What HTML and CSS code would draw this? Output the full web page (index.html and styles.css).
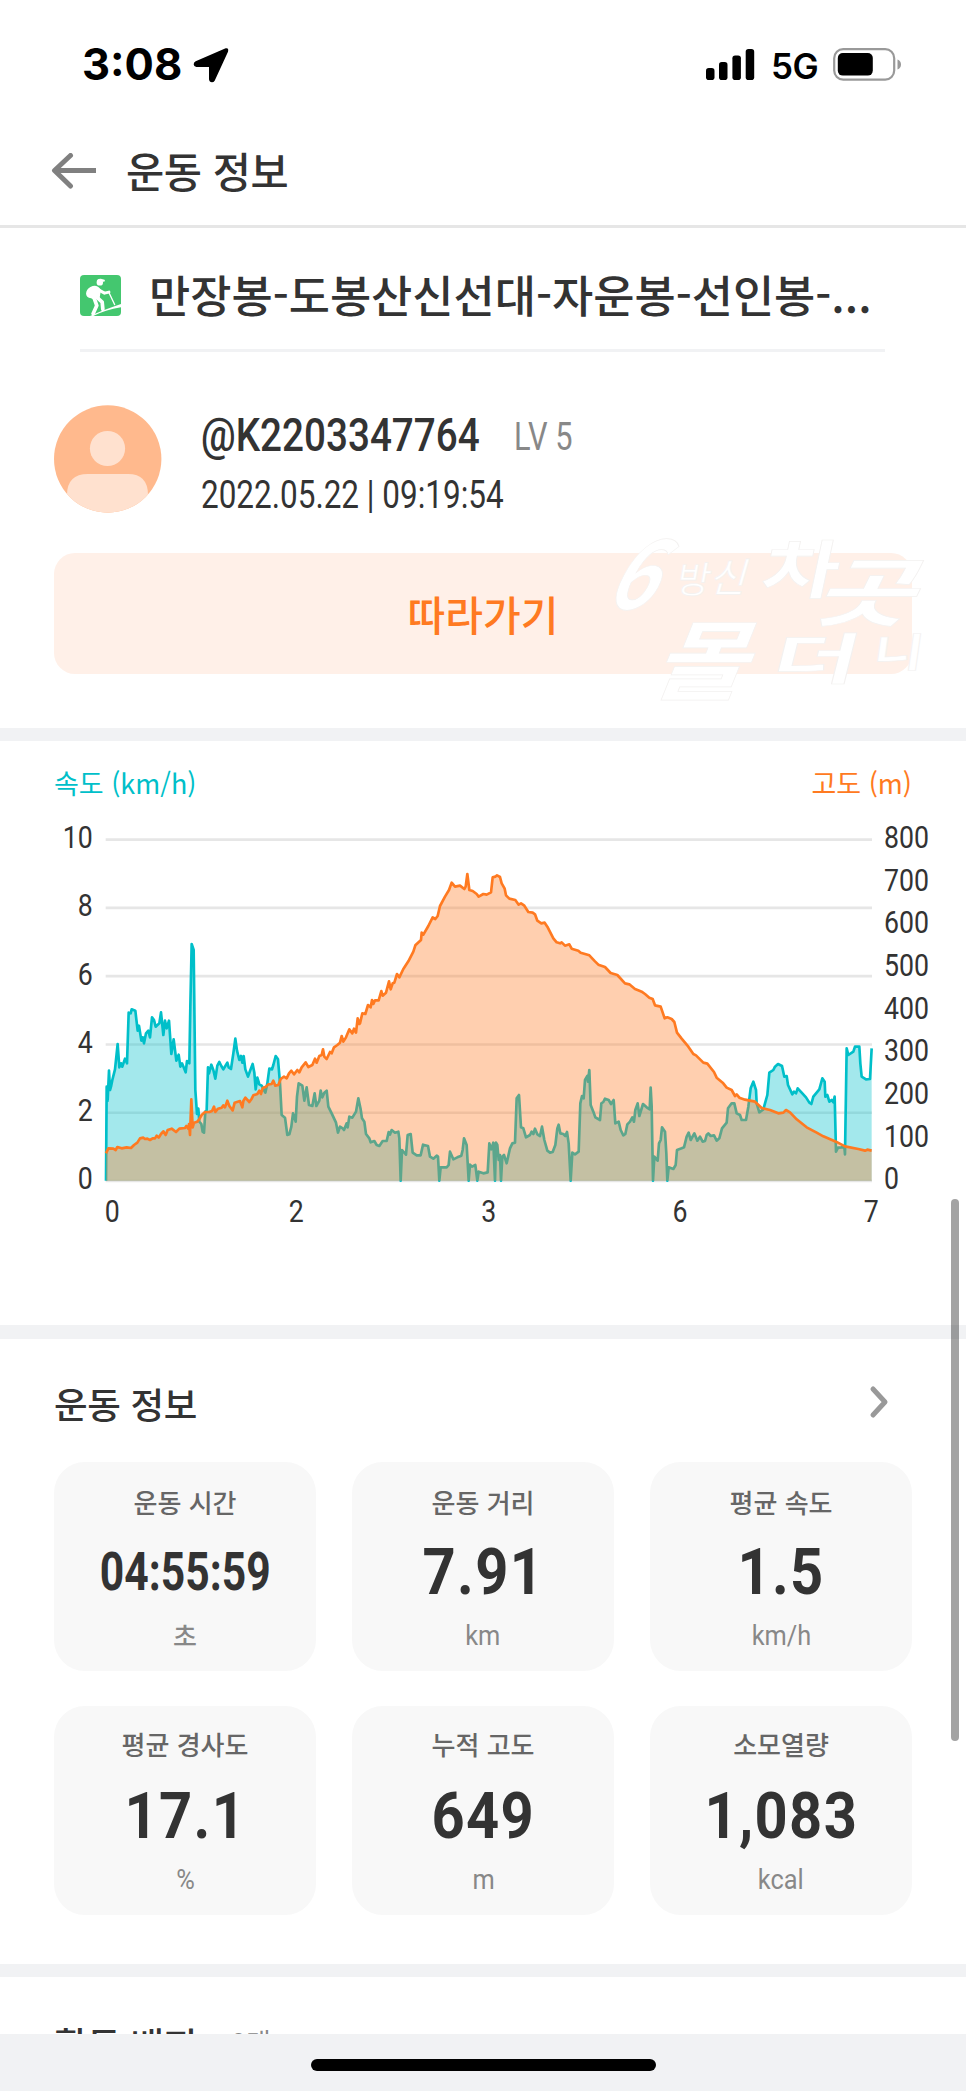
FILE: index.html
```html
<!DOCTYPE html>
<html lang="ko">
<head>
<meta charset="utf-8">
<title>운동 정보</title>
<link rel="stylesheet" href="styles.css">
</head>
<body>
<div class="screen">
  <div class="statusbar">
    <div class="status-left">
      <span class="clock">3:08</span>
      <svg class="location" width="36" height="36" viewBox="0 0 108 108"><path d="M98 4Q108 2 105 14L65 101Q62 106 57 106Q49 106 48 97L48 60L10 60Q2 59 2 52Q2 46 8 43Z"/></svg>
    </div>
    <div class="status-right">
      <svg width="49" height="32" viewBox="0 0 49 32"><rect x="0" y="19" width="8.5" height="12" rx="2.8"/><rect x="13" y="13" width="8.5" height="18" rx="2.8"/><rect x="26.4" y="6.5" width="8.5" height="24.5" rx="2.8"/><rect x="39.7" y="0" width="8.5" height="31" rx="2.8"/></svg>
      <span class="network">5G</span>
      <svg width="69" height="33" viewBox="0 0 69 33"><rect x="1.2" y="1.2" width="60" height="30.4" rx="9" fill="none" stroke="#999" stroke-width="2.2"/><rect x="4.8" y="5" width="35" height="22.6" rx="5"/><path d="M64.5 11.5Q68 13 68 16.4Q68 20 64.5 21.4Z" fill="#999"/></svg>
    </div>
  </div>

  <header class="header">
    <svg width="46" height="36" viewBox="0 0 46 36" fill="none" stroke="#808080" stroke-width="5"><path d="M45 17.5H3"/><path d="M19.500 2.500L3.500 17.500L19.500 33" stroke-linecap="round" stroke-linejoin="round"/></svg>
    <h1>운동 정보</h1>
  </header>

  <section class="course">
    <svg class="hike" width="41" height="41" viewBox="15 15 122 122" fill="none" stroke="#fff" stroke-linecap="round" stroke-linejoin="round">
      <rect x="15" y="15" width="122" height="122" rx="12" fill="#44c76f" stroke="none"/>
      <g fill="#fff" stroke="none">
        <circle cx="74" cy="37" r="9.500"/><path d="M65 33Q67 25 77 26L88 29Q91 32 87 35Z"/>
        <path d="M46 51Q58 44 67 49Q77 54 77 62L73 86L55 88L48 84Q33 82 33 70Q34 58 46 51Z"/>
        <path d="M45 137Q75 122 137 101V111Q90 119 54 137Z"/>
      </g>
      <path d="M73 61L88 69L101 66" stroke-width="9"/>
      <path d="M68 84L81 96L83 117" stroke-width="11"/>
      <path d="M58 86L65 106L54 130" stroke-width="11"/>
      <path d="M101 67L118 103" stroke-width="4"/>
    </svg>
    <h2>만장봉-도봉산신선대-자운봉-선인봉-...</h2>
  </section>

  <section class="profile">
    <div class="user">
      <svg width="108" height="108" viewBox="0 0 108 108"><defs><clipPath id="avatar"><circle cx="53.700" cy="54" r="53.700"/></clipPath></defs><g clip-path="url(#avatar)"><rect width="108" height="108" fill="#ffb98d"/><circle cx="53.500" cy="43.500" r="17.600" fill="#ffe1cf"/><path d="M13 108V90Q13 69 34 69H74Q94 69 94 90V108Z" fill="#ffe1cf"/></g></svg>
      <div class="user-text">
        <div class="user-line"><span class="name"><b class="narrow">@K2203347764</b></span><span class="level narrow">LV 5</span></div>
        <div class="date"><span class="narrow">2022.05.22 | 09:19:54</span></div>
      </div>
    </div>
    <div class="follow">따라가기
      <svg class="mark" width="400" height="200" viewBox="0 0 1200 600">
        <text transform="translate(125 268) skewX(-28)" font-size="280" textLength="145" lengthAdjust="spacingAndGlyphs">6</text>
        <text transform="translate(345 220) skewX(-10)" font-size="110" class="thin">방</text>
        <text transform="translate(445 215) skewX(-16)" font-size="120" class="thin">신</text>
        <text transform="translate(595 220) skewX(-12)" font-size="190" textLength="230" lengthAdjust="spacingAndGlyphs">차</text>
        <text transform="translate(750 300) skewX(-26)" font-size="225" textLength="300" lengthAdjust="spacingAndGlyphs">곳</text>
        <text transform="translate(270 520) skewX(-22)" font-size="260" textLength="280" lengthAdjust="spacingAndGlyphs">몰</text>
        <text transform="translate(625 478) skewX(-14)" font-size="165" textLength="260" lengthAdjust="spacingAndGlyphs">더</text>
        <text transform="translate(935 442) skewX(-8)" font-size="120" textLength="150" lengthAdjust="spacingAndGlyphs">니</text>
      </svg>
    </div>
  </section>

  <section class="chart-section">
    <div class="legend"><span class="speed">속도 (km/h)</span><span class="altitude">고도 (m)</span></div>
    <svg id="chart" class="chart" width="906" height="440" viewBox="0 -60 2718 1320"></svg>
  </section>

  <section class="info">
    <div class="info-head"><h3>운동 정보</h3>
      <svg width="20" height="34" viewBox="0 0 20 34"><path d="M4 4L16 17L4 30" fill="none" stroke="#999" stroke-width="5" stroke-linecap="round" stroke-linejoin="round"/></svg></div>
    <div class="cards">
      <div class="card"><div class="label">운동 시간</div><div class="value time"><span>04:55:59</span></div><div class="unit ko">초</div></div>
      <div class="card"><div class="label">운동 거리</div><div class="value"><span>7.91</span></div><div class="unit"><span>km</span></div></div>
      <div class="card"><div class="label">평균 속도</div><div class="value"><span>1.5</span></div><div class="unit"><span>km/h</span></div></div>
      <div class="card lower"><div class="label">평균 경사도</div><div class="value"><span>17.1</span></div><div class="unit"><span>%</span></div></div>
      <div class="card lower"><div class="label">누적 고도</div><div class="value"><span>649</span></div><div class="unit"><span>m</span></div></div>
      <div class="card lower"><div class="label">소모열량</div><div class="value"><span>1,083</span></div><div class="unit"><span>kcal</span></div></div>
    </div>
  </section>

  <section class="badges"><h3>활동 배지</h3><span>0개</span></section>
  <div class="home"><div class="home-bar"></div></div>
  <div class="scrollbar"></div>
</div>
<script src="chart.js"></script>
</body>
</html>
```
FILE: styles.css
```css
* { box-sizing: border-box; }
body { margin: 0; background: #fff; font-family: "Noto Sans CJK KR", sans-serif; color: #333; }
h1, h2, h3 { margin: 0; font-weight: 500; white-space: nowrap; }
svg { display: block; flex: none; }

.screen { position: relative; width: 966px; height: 2091px; overflow: hidden; display: flex; flex-direction: column; background: #fff; }
.screen > * { flex: none; }

.statusbar { height: 97px; padding: 32px 64px 0 82px; display: flex; justify-content: space-between; font-family: Inter, sans-serif; color: #000; }
.status-left, .status-right { display: flex; align-items: center; height: 65px; }
.clock { font-size: 43.5px; font-weight: 700; line-height: 65px; width: 111px; }
.location { margin-top: 1px; }
.status-right { gap: 16px; }
.network { font-size: 35px; font-weight: 600; line-height: 65px; width: 46px; margin-top: 3px; letter-spacing: -.5px; }

.header { height: 131px; border-bottom: 3px solid #e6e6e6; padding: 20px 51px 0; display: flex; align-items: center; gap: 29px; }
.header h1 { font-size: 41.5px; line-height: 60px; letter-spacing: -.4px; margin-top: -2px; }

.course { margin: 0 81px 0 80px; height: 124px; border-bottom: 3px solid #f1f2f4; display: flex; align-items: center; gap: 28px; padding-top: 14px; }
.course h2 { font-size: 44.8px; line-height: 64px; margin-top: -4px; }

.profile { height: 389px; padding: 53px 54px 0; border-bottom: 13px solid #f1f2f4; }
.user { display: flex; gap: 39px; height: 108px; }
.user-text { font-family: Roboto, sans-serif; white-space: nowrap; }
.narrow { display: inline-block; transform: scaleX(.84); transform-origin: left center; }
.user-line { display: flex; align-items: center; height: 60px; }
.name { width: 313px; font-size: 46px; }
.name b { font-weight: 500; }
.level { font-size: 38px; color: #888; font-weight: 400; transform: scaleX(.81); padding-top: 3px; }
.date { font-size: 38px; line-height: 60px; }
.date .narrow { transform: scaleX(.828); }
.follow { position: relative; margin-top: 40px; height: 121px; border-radius: 21px; background: #fff0e8; color: #ff7a21; font-size: 41px; font-weight: 500; line-height: 121px; text-align: center; }
.mark { position: absolute; left: 506px; top: -33px; overflow: visible; fill: #fff; stroke: #f3f1f0; stroke-width: 2px; font-weight: 700; }
.mark .thin { font-weight: 400; }

.chart-section { height: 598px; border-bottom: 14px solid #f1f2f4; padding-top: 22px; }
.legend { display: flex; justify-content: space-between; padding: 0 54px; font-size: 27px; line-height: 40px; height: 40px; }
.speed { color: #00bfc9; }
.altitude { color: #ff7a21; }
.chart { margin: -3px 0 0 60px; font-family: Roboto, sans-serif; font-size: 96px; fill: #333; }
.grid { stroke: #e6e6e6; stroke-width: 8; }
.area-speed { fill: #00bfc9; fill-opacity: .36; }
.area-altitude { fill: #ff7a21; fill-opacity: .36; }
.line { fill: none; stroke-width: 8; stroke-linejoin: round; }
.line-speed { stroke: #00bfc9; }
.line-altitude { stroke: #ff7a21; }

.info { height: 638px; border-bottom: 13px solid #f1f2f4; }
.info-head { display: flex; justify-content: space-between; height: 123px; padding: 35px 77px 0 54px; }
.info-head h3, .badges h3 { font-size: 36.5px; line-height: 60px; letter-spacing: -.3px; }
.info-head svg { margin-top: 11px; }
.cards { display: grid; grid-template-columns: repeat(3, 262px); justify-content: space-between; row-gap: 35px; padding: 0 54px; }
.card { height: 209px; border-radius: 31px; background: #f8f8f8; padding-top: 20px; text-align: center; display: flex; flex-direction: column; }
.label { font-size: 26px; line-height: 40px; font-weight: 500; color: #666; }
.lower .label { line-height: 36px; height: 40px; }
.value { font-family: Roboto, sans-serif; font-size: 65px; line-height: 101px; height: 100px; font-weight: 700; letter-spacing: 1.5px; }
.value span, .unit span { display: inline-block; transform: scaleX(.89); }
.time { font-size: 53px; letter-spacing: 0; }
.time span { transform: scaleX(.805); }
.unit { font-family: Roboto, sans-serif; font-size: 28.5px; line-height: 28px; color: #888; }
.unit.ko { font-family: "Noto Sans CJK KR", sans-serif; font-size: 26px; line-height: 25px; font-weight: 500; }

.badges { height: 57px; overflow: hidden; padding: 37px 54px 0; display: flex; gap: 34px; }
.badges span { font-size: 27px; line-height: 60px; margin-top: -2px; color: #888; }
.home { height: 57px; background: #f1f2f4; padding-top: 25px; }
.home-bar { width: 345px; height: 12px; border-radius: 6px; background: #000; margin: 0 auto; }
.scrollbar { position: absolute; left: 951px; top: 1199px; width: 8px; height: 542px; border-radius: 4px; background: rgba(0, 0, 0, .36); }
```
FILE: chart.js
```javascript
// Each series is a list of [x offset, "x,y x,y ..."] chunks.
var speed = [
  [0, "140,800 143,842 147,752 150,810 153,800 157,780 165,748 173,672 178,742 183,730 187,740 195,716 201,730 206,578 212,580 215,568 226,572 233,632 237,617 244,662 248,652 252,670 258,640 265,632 270,652 276,592 282,600 287,620 298,610 303,577 310,645 315,602 320,625 327,602 334,702 341,658 349,722 356,704 361,740 366,730 371,742 377,757 381,723 388,730 391,560 395,372 401,390 406,810 411,882 415,866 418,905 424,912 428,935 432,938 436,875 440,870 444,742 447,760 454,734 460,750 466,776 472,737 478,726 484,738 490,748 496,738 502,728 506,742 513,747 520,700 526,656 531,692 538,720 543,708 547,728 551,708 556,748 564,770 570,753 578,732 583,758 587,808 592,773 598,793 605,797 616,818 622,790 628,746 636,748 640,735 647,708 654,718 660,790 665,885 675,893 682,945 688,943 694,920 699,880 707,905 711,830 716,790 727,797 733,842 740,802 747,855 757,858 764,820 769,858 778,842 782,812 787,832 793,818 800,812 805,860 815,880 828,908 834,938 840,920 848,925 852,930 860,910 863,922 868,890 877,893 888,875 895,835 902,868"],
  [840, "66,895 73,905 78,942 88,955 92,967 103,963 110,975 118,978 128,963 140,963 146,936 150,944 155,930 165,938 175,935 178,955 182,1082 186,990 198,1004 203,945 212,942 218,998 230,1006 242,1006 249,974 264,978 270,1010 280,1016 290,1007 294,1010 298,1082 302,1042 320,1042 326,1035 330,995 340,1018 352,1012 364,1007 368,990 372,955 380,975 386,1082 390,1034 396,1040 406,1035 412,1082 416,1055 430,1060 443,1057 448,970 454,988 460,968 465,1082 468,968 472,975 476,1020 480,1005 483,1082 487,1010 492,1005 500,1030 510,985 517,970 525,968 530,835 537,825 543,922 550,925 558,952 570,945 575,935 580,942 585,926 592,943 600,948 606,920 613,960 622,992 630,998 638,996 646,975 652,925 656,914 661,940 670,942 676,948 681,936 686,970 692,1082 697,998 705,1003 716,995 721,850 726,828 731,835 735,780 742,768 744,785 748,750 752,855 760,875 766,892 780,900 784,850 790,846 795,836 806,840 813,852 821,840 826,910 836,905 842,930 850,946 856,942 862,913 870,905 877,892 882,905 886,870 893,850 898,888"],
  [1680, "69,852 80,862 89,868 92,803 95,860 99,1082 103,1010 113,1022 117,970 122,960 126,922 135,935 139,1000 142,1082 146,1042 160,1047 167,1035 171,990 185,985 192,982 200,950 206,938 212,960 223,940 232,962 240,950 248,965 255,963 260,945 265,940 272,948 282,946 290,962 298,955 306,925 320,908 324,865 335,850 343,850 350,880 360,885 365,900 378,900 385,860 392,805 400,785 408,810 410,850 418,877 430,868 435,850 442,825 448,758 460,750 465,740 474,732 486,738 493,770 500,768 504,795 517,823 522,815 528,820 533,805 545,818 558,832 568,848 574,852 580,830 598,808 607,775 614,785 616,830 622,825 628,845 635,840 640,847 644,830 648,995 654,983 664,982 673,980 675,1003 680,685 685,705 700,695 705,680 718,680 721,730 725,770 738,778 750,777 755,685"]
];
var altitude = [
  [0, "138,1000 145,985 160,986 167,990 172,981 185,985 200,982 213,984 222,975 232,968 240,955 250,953 255,957 262,956 270,960 278,955 285,955 290,947 296,953 303,942 310,934 317,945 323,930 335,926 348,936 358,926 375,924 379,918 385,926 387,912 390,945 394,838 398,922 402,908 412,905 418,897 425,885 435,876 448,876 456,873 462,860 466,876 474,866 485,863 490,856 495,862 502,842 508,858 518,871 524,848 540,843 547,862 550,843 556,833 568,846 575,836 580,826 592,822 598,812 603,822 608,804 618,800 625,793 635,792 640,782 646,797 655,795 662,777 672,770 680,775 687,760 694,752 702,763 712,750 718,757 725,742 737,727 745,741 757,735 765,716 770,728 778,708 785,705 789,688 793,710 800,717 810,696 815,700 822,682 832,675 840,668 845,648 850,665 858,652 868,628 877,640 882,626 888,638 893,595 898,612"],
  [840, "60,610 67,580 76,582 84,555 92,562 96,540 100,552 105,541 116,541 124,513 128,527 138,518 147,484 152,508 158,490 163,488 171,462 178,472 190,447 205,424 220,395 226,376 243,360 245,338 250,344 265,318 278,292 286,297 293,288 300,258 315,230 327,210 335,188 345,200 360,197 373,207 377,200 382,162 388,210 398,213 410,222 416,230 430,222 440,224 453,217 458,172 466,170 471,166 480,171 485,190 494,206 498,226 508,236 526,240 536,254 543,250 552,256 565,276 578,278 585,283 592,302 604,310 614,308 622,320 640,355 650,367 660,370 665,367 675,377 688,373 695,386 715,392 722,398 748,406 765,424 775,434 795,441 812,459 832,465 855,490 868,493 885,507 900,513"],
  [1680, "65,515 75,522 88,533 98,537 105,556 122,560 134,595 142,592 155,597 163,606 171,638 185,656 205,680 220,702 228,706 250,728 262,731 282,756 290,773 308,788 320,803 335,810 345,828 350,823 358,833 375,839 405,845 425,864 450,870 475,880 490,878 498,870 510,877 530,898 560,922 590,938 610,949 648,965 675,979 715,987 735,992 742,989 755,992"]
];
function points(series) {
  return series.map(function (chunk) {
    return chunk[1].split(" ").map(function (p) {
      var xy = p.split(",");
      return (+xy[0] + chunk[0]) + "," + xy[1];
    }).join(" ");
  }).join(" ");
}
function label(text, x, y, anchor) {
  return '<text x="' + x + '" y="' + y + '" text-anchor="' + anchor + '" textLength="' + text.length * 45 + '" lengthAdjust="spacingAndGlyphs">' + text + '</text>';
}
var out = "";
for (var i = 0; i <= 5; i++) {
  var y = 59 + i * 204.8;
  out += '<line class="grid" x1="137" x2="2436" y1="' + y + '" y2="' + y + '"/>';
  out += label(String(10 - i * 2), 98, y + 25, "end");
}
for (var j = 0; j <= 8; j++) out += label(String(800 - j * 100), 2472, 84 + j * 128, "start");
[["0", 157], ["2", 709], ["3", 1286], ["6", 1860], ["7", 2434]].forEach(function (t) { out += label(t[0], t[1], 1207, "middle"); });
var s = points(speed), a = points(altitude);
out += '<polygon class="area-speed" points="138,1082 ' + s + ' 2435,1082"/>';
out += '<polyline class="line line-speed" points="138,1082 ' + s + '"/>';
out += '<polygon class="area-altitude" points="138,1082 ' + a + ' 2435,1082"/>';
out += '<polyline class="line line-altitude" points="' + a + '"/>';
document.getElementById("chart").innerHTML = out;
```
